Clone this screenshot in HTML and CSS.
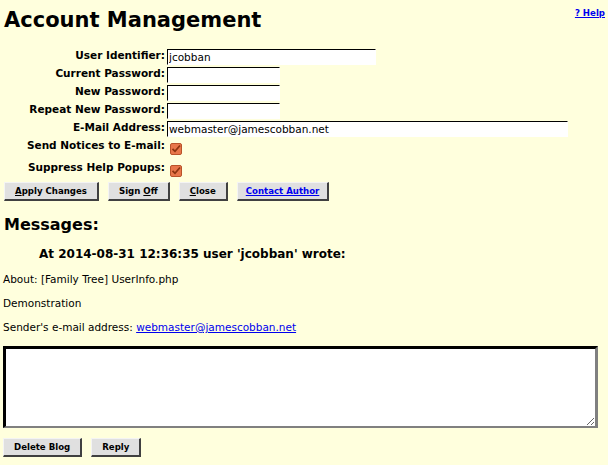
FILE: index.html
```html
<!DOCTYPE html>
<html>
<head>
<meta charset="utf-8">
<title>Account Management</title>
<link rel="stylesheet" href="styles.css">
</head>
<body>
<header class="top">
  <h1 class="title">Account Management</h1>
  <a class="help" href="#">? Help</a>
</header>
<form class="account">
  <div class="row"><label class="lbl">User Identifier:</label><input class="field w-id" type="text" value="jcobban"></div>
  <div class="row"><label class="lbl">Current Password:</label><input class="field w-pw" type="password"></div>
  <div class="row"><label class="lbl">New Password:</label><input class="field w-pw" type="password"></div>
  <div class="row"><label class="lbl">Repeat New Password:</label><input class="field w-pw" type="password"></div>
  <div class="row"><label class="lbl">E-Mail Address:</label><input class="field w-mail" type="text" value="webmaster@jamescobban.net"></div>
  <div class="row crow"><label class="lbl">Send Notices to E-mail:</label><input class="chk" type="checkbox" checked></div>
  <div class="row crow"><label class="lbl">Suppress Help Popups:</label><input class="chk" type="checkbox" checked></div>
  <div class="buttons top-buttons">
    <button type="button" class="btn"><u>A</u>pply Changes</button>
    <button type="button" class="btn">Sign <u>O</u>ff</button>
    <button type="button" class="btn"><u>C</u>lose</button>
    <button type="button" class="btn btn-narrow"><a class="btn-link" href="#">Contact Author</a></button>
  </div>
</form>
<h2 class="messages">Messages:</h2>
<h3 class="msg-head">At 2014-08-31 12:36:35 user 'jcobban' wrote:</h3>
<p class="para">About: [Family Tree] UserInfo.php</p>
<p class="para">Demonstration</p>
<p class="para">Sender's e-mail address: <a class="link" href="#">webmaster@jamescobban.net</a></p>
<textarea class="reply"></textarea>
<div class="buttons bottom-buttons">
  <button type="button" class="btn">Delete Blog</button>
  <button type="button" class="btn">Reply</button>
</div>
</body>
</html>
```
FILE: styles.css
```css
html, body {
  margin: 0;
  padding: 0;
}
body {
  background: #ffffdd;
  font-family: "DejaVu Sans", Verdana, sans-serif;
  font-size: 10.5px;
  color: #000;
  padding: 0 3px;
  width: 602px;
}
.top {
  display: flex;
  justify-content: space-between;
  align-items: flex-start;
}
.title {
  margin: 8px 0 0 1px;
  font-size: 21px;
  line-height: 25px;
  font-weight: bold;
}
.help {
  margin: 8px 0 0 0;
  font-size: 8.6px;
  font-weight: bold;
  color: #0000ee;
  line-height: 11px;
}
.account {
  margin: 15px 0 0 0;
}
.row {
  display: grid;
  grid-template-columns: 162px auto;
  column-gap: 2px;
  height: 18px;
  align-items: start;
  justify-items: start;
}
.lbl {
  justify-self: end;
  font-weight: bold;
  line-height: 14px;
}
.field {
  box-sizing: border-box;
  height: 16px;
  margin: 1px 0 0 0;
  padding: 0 1px;
  border: 1px solid;
  border-color: #000 #fff #fff #000;
  background: #fff;
  font-family: "DejaVu Sans", sans-serif;
  font-size: 10.5px;
  color: #000;
  outline: none;
}
.w-id { width: 209px; }
.w-pw { width: 113px; }
.w-mail { width: 401px; }
.crow {
  height: 22px;
}
.chk {
  appearance: none;
  -webkit-appearance: none;
  width: 12px;
  height: 12px;
  margin: 5px 0 0 3px;
  border: 1px solid #b9532a;
  border-radius: 2px;
  background-color: #e8764a;
  background-image: url("data:image/svg+xml;utf8,<svg xmlns='http://www.w3.org/2000/svg' width='12' height='12' viewBox='0 0 12 12'><path d='M2.5 5.8 L5 8.3 L10 2.5' fill='none' stroke='%238c3410' stroke-width='1.8'/></svg>");
  background-repeat: no-repeat;
  background-position: center;
  box-sizing: border-box;
}
.buttons {
  display: flex;
  gap: 9px;
}
.top-buttons {
  margin: 0 0 0 1px;
}
.btn {
  box-sizing: border-box;
  height: 19px;
  padding: 0 10px;
  margin: 0;
  background: #e0e0e0;
  border-style: solid;
  border-width: 1px 2px 2px 1px;
  border-color: #f4f4f4 #404040 #404040 #f4f4f4;
  border-radius: 0;
  font-family: "DejaVu Sans", sans-serif;
  font-size: 8.6px;
  font-weight: bold;
  color: #000;
  line-height: 15px;
}
.btn-narrow {
  padding: 0 8px;
}
.btn-link {
  color: #0000ee;
}
.messages {
  margin: 14px 0 0 1px;
  font-size: 16px;
  line-height: 19px;
  font-weight: bold;
}
.msg-head {
  margin: 13px 0 0 36px;
  font-size: 12px;
  line-height: 15px;
  font-weight: bold;
}
.para {
  margin: 11px 0 0 0;
  line-height: 13px;
}
.link {
  color: #0000ee;
}
.reply {
  display: block;
  box-sizing: border-box;
  width: 595px;
  height: 82px;
  margin: 12px 0 0 0;
  padding: 2px;
  background: #fff;
  border-style: solid;
  border-width: 3px 3px 2px 3px;
  border-color: #000 #808080 #808080 #000;
  font-family: "DejaVu Sans", sans-serif;
  font-size: 10.5px;
  outline: none;
}
.bottom-buttons {
  margin: 10px 0 0 0;
}
```
